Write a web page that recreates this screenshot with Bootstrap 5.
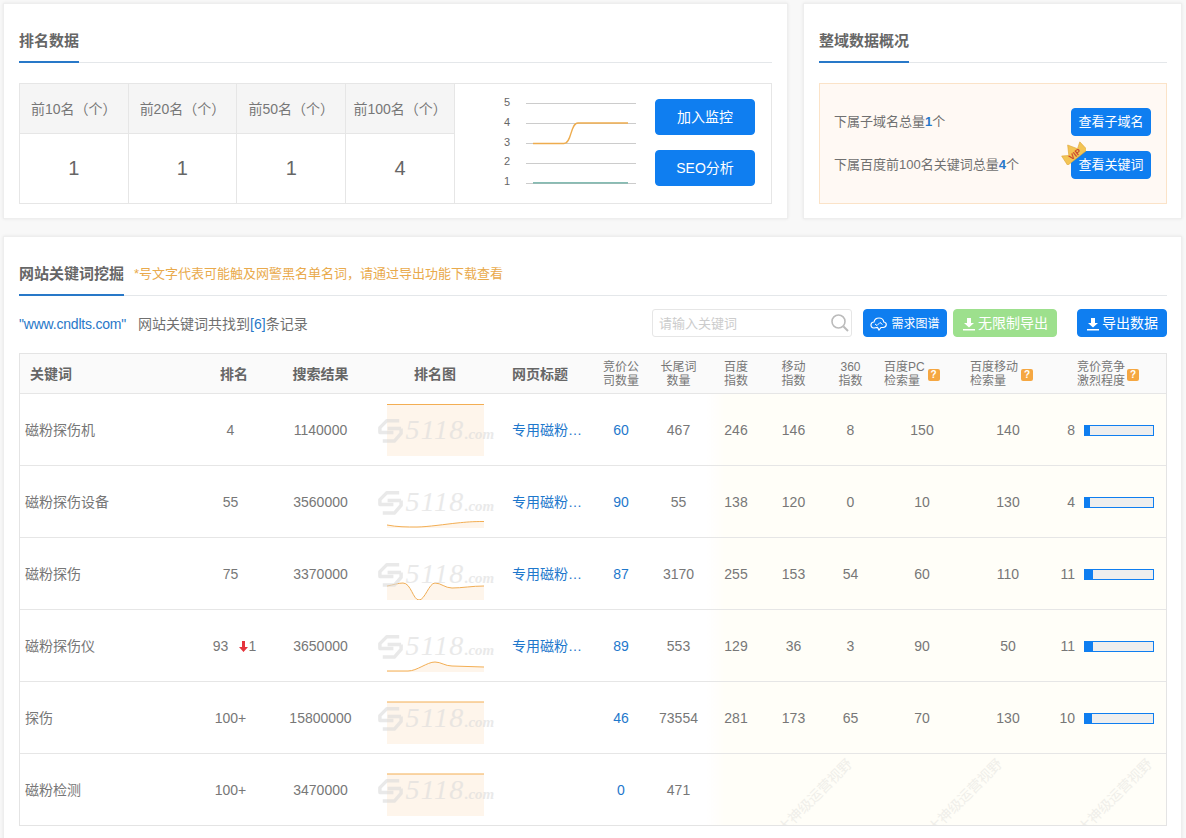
<!DOCTYPE html>
<html lang="zh-CN">
<head>
<meta charset="utf-8">
<title>网站关键词挖掘</title>
<link rel="stylesheet" href="https://cdn.jsdelivr.net/npm/bootstrap@5.3.0/dist/css/bootstrap.min.css">
<style>
html,body{overflow:hidden;height:838px}
body{background:#f8f8f8;color:#777;font:14px/20px "Liberation Sans","Noto Sans CJK SC",sans-serif;padding:3px 4px 0 3px}
.top-row{gap:15px}
.pane{background:#fff;border:1px solid #eee;box-shadow:0 0 3px rgba(0,0,0,.08);padding:19px 15px 15px}
.pane-top{height:216px}
.pane-main{width:785px;flex:none}
.pane-side{width:379px;flex:none;padding-right:14px}
.pane-low{margin-top:17px;height:640px;position:relative;padding-right:14px}
.tabline{display:flex;align-items:flex-start;border-bottom:1px solid #e4e7ea;height:40px}
.tabname{display:block;height:40px;line-height:36px;font-size:15px;font-weight:700;color:#666;border-bottom:2px solid #2878c8}
.note{color:#e9aa4c;font-size:13px;line-height:35px;margin-left:10px}
.rank-box{margin-top:20px;height:121px;border:1px solid #e6e6e6}
.rank-grid{width:435px;flex:none;margin:0;table-layout:fixed;--bs-table-bg:transparent;color:#666}
.rank-grid th,.rank-grid td{border:1px solid #e6e6e6;border-width:0 1px 1px 0;padding:0;text-align:center;vertical-align:middle}
.rank-grid th:first-child{width:108px}
.rank-grid tr:last-child td{border-bottom:0}
.rank-grid th{height:49px;background:#f5f5f5;font-weight:400;color:#777;white-space:nowrap;padding-top:2px}
.rank-grid td{height:70px;font-size:20px;color:#666}
.btn-blue{--bs-btn-bg:#0f7ef0;--bs-btn-border-color:#0f7ef0;--bs-btn-color:#fff;--bs-btn-hover-bg:#0f7ef0;--bs-btn-hover-color:#fff;--bs-btn-border-radius:4px;--bs-btn-padding-x:0;--bs-btn-padding-y:0;--bs-btn-font-size:14px}
.big-btn{width:100px;height:36px;line-height:34px}
.ctrl-col{margin-left:14px;padding-top:15px;gap:15px}
.trend{width:145px;height:104px;margin-left:41px;display:block;flex:none}
.trend text{font:11px "Liberation Sans",sans-serif;fill:#666}
.over-box{margin-top:20px;height:121px;background:#fff9f4;border:1px solid #fbe3c8;padding:24px 15px 0 14px;font-size:13px;gap:15px;color:#707070}
.over-box b{color:#2878c8}
.mini-btn{width:80px;height:28px;line-height:26px;--bs-btn-font-size:13px}
.crown{position:absolute;left:-10px;top:-11px;width:25px;height:25px}
.tool{margin-top:13px;height:28px;margin-bottom:16px}
.site{color:#2878c8}
.site-url{letter-spacing:-.2px;padding-top:2px}
.found{margin-left:12px;margin-right:auto;color:#707070;padding-top:2px}
.finder{width:200px;height:28px;border:1px solid #e6e6e6;border-radius:3px;font-size:13px;color:#ccc;padding:0 0 0 6px}
.finder span{padding-top:2px}
.finder svg{margin-right:1px}
.tbtn{height:28px;display:inline-flex;align-items:center;justify-content:center;gap:2px;padding-top:1px}
.tb-a{width:84px;--bs-btn-font-size:12px;gap:4px;margin-left:11px}
.tb-b{width:104px;margin-left:6px;--bs-btn-bg:#9de08d;--bs-btn-border-color:#9de08d;--bs-btn-hover-bg:#9de08d;--bs-btn-hover-border-color:#9de08d}
.tb-c{width:90px;margin-left:20px}
.grid-wrap{position:relative;overflow:hidden;border:1px solid #e4e4e4;height:473px}
.kw{table-layout:fixed;margin:0;width:1146px;--bs-table-bg:transparent;color:#777}
.kw>:not(caption)>*>*{padding:2px 0 0;border-bottom:1px solid #e6e6e6;text-align:center;vertical-align:middle;color:#777;box-shadow:none}
.kw thead th{height:39px;background:#fafafa;font-weight:700;color:#666}
.kw thead th.thin{font-weight:400;font-size:12px;line-height:14px;color:#777}
.kw tbody td{height:72px}
.kw tbody tr:last-child td{border-bottom:0}
.kw .kn{text-align:left;padding-left:5px}
.kw thead .kn{padding-left:10px}
.kw thead .hd-rank{padding-left:7px}
.kw .tt{text-align:left;padding-left:17px}
.kw thead .tt{padding-left:17px}
.kw td a{color:#1e78cc;text-decoration:none}
.kw .warm{background:#fffef8}
.kw .warm-in{background:linear-gradient(90deg,#fff,#fffef8 30%,#fffef8)}
.w1{width:175px}.w2{width:71px}.w3{width:109px}.w4{width:120px}.w5{width:97px}.w6{width:58px}.w7{width:57px}.w8{width:58px}.w9{width:57px}.w10{width:57px}.w11{width:86px}.w12{width:86px}.w13{width:115px}
.hq{display:flex;align-items:center;gap:3px;text-align:left;padding-left:5px}
.hq-c{padding-left:26px;gap:2px}
.qm{flex:none;display:block;width:12px;height:12px;border-radius:2px;background:#f5a742;color:#fff;font-size:10px;font-weight:700;line-height:12px;text-align:center;margin-top:2px}
.spark{position:relative;width:97px;height:52px;margin:0 auto}
.spark svg.pic{display:block;width:97px;height:52px}
.wm{position:absolute;left:-10px;top:11px;width:118px;height:30px;display:flex;align-items:center;color:#dcdcdc;opacity:.6;font-family:"Liberation Serif",serif;font-style:italic;white-space:nowrap}
.wm svg{width:27px;height:27px;flex:none}
.wm b{font-size:28px;font-weight:400;letter-spacing:1.300px;margin-left:2px}
.wm i{font-size:15px;font-weight:700;margin-top:7px}
.comp{display:flex;align-items:center;justify-content:flex-end;padding-right:12px;gap:9px}
.meter{width:70px;height:11px;border:1px solid #0f7ef0;background:#eee;display:block}
.meter span{display:block;height:100%;background:#0f7ef0}
.rank-move{margin-left:8px}
.down{display:inline-flex;align-items:center;margin-left:11px}
.stamp{position:absolute;transform:rotate(-45deg);color:#f0efea;font-size:14px;white-space:nowrap;top:432px;pointer-events:none}
.st-a{left:746px}.st-b{left:896px}.st-c{left:1046px}
</style>
</head>
<body>
<svg width="0" height="0" class="position-absolute">
  <symbol id="logo" viewBox="0 0 28 28"><path d="M23 4H10L3 11v5h14M25 12H11M25 12v5l-7 8H6" fill="none" stroke="currentColor" stroke-width="3.6" stroke-linejoin="round"/></symbol>
  <symbol id="dl" viewBox="0 0 14 14"><path d="M5 1h4v5h3L7 10.500 2 6h3zM1 12h12v1.600H1z" fill="#fff"/></symbol>
</svg>

<div class="d-flex top-row">
  <section class="pane pane-top pane-main">
    <div class="tabline"><span class="tabname">排名数据</span></div>
    <div class="rank-box d-flex">
      <table class="table rank-grid">
        <thead><tr><th>前10名（个）</th><th>前20名（个）</th><th>前50名（个）</th><th>前100名（个）</th></tr></thead>
        <tbody><tr><td>1</td><td>1</td><td>1</td><td>4</td></tr></tbody>
      </table>
      <svg class="trend" viewBox="0 0 145 104">
        <path d="M30 19.500H140M30 39.500H140M30 59.500H140M30 79.500H140M30 99.500H140" stroke="#ccc" stroke-width="1"/>
        <g text-anchor="middle"><text x="11" y="22">5</text><text x="11" y="42">4</text><text x="11" y="62">3</text><text x="11" y="81">2</text><text x="11" y="101">1</text></g>
        <path d="M37 59.500H68C76 59.500 74 39 82 39H132" fill="none" stroke="#eeac4e" stroke-width="1.300"/>
        <path d="M37 98.800H132" fill="none" stroke="#5fa79b" stroke-width="1.300"/>
      </svg>
      <div class="ctrl-col d-flex flex-column">
        <a class="btn btn-blue big-btn" href="#">加入监控</a>
        <a class="btn btn-blue big-btn" href="#">SEO分析</a>
      </div>
    </div>
  </section>
  <section class="pane pane-top pane-side">
    <div class="tabline"><span class="tabname">整域数据概况</span></div>
    <div class="over-box d-flex flex-column">
      <div class="d-flex justify-content-between align-items-center">
        <span>下属子域名总量<b>1</b>个</span>
        <a class="btn btn-blue mini-btn" href="#">查看子域名</a>
      </div>
      <div class="d-flex justify-content-between align-items-center">
        <span>下属百度前100名关键词总量<b>4</b>个</span>
        <span class="position-relative d-block">
          <a class="btn btn-blue mini-btn" href="#">查看关键词</a>
          <svg class="crown" viewBox="0 0 25 25"><g transform="rotate(-38 12.500 12.500)"><path d="M0 19 L1 8 L7 12 L12.500 3 L18 12 L24 8 L25 19 Z" fill="#f3c454" stroke="#dfa83a" stroke-width=".6"/><text x="12.500" y="17.500" text-anchor="middle" font-size="8" font-weight="700" fill="#c8452a" font-family="Liberation Sans">VIP</text></g></svg>
        </span>
      </div>
    </div>
  </section>
</div>

<section class="pane pane-low">
  <div class="tabline"><span class="tabname">网站关键词挖掘</span><span class="note">*号文字代表可能触及网警黑名单名词，请通过导出功能下载查看</span></div>
  <div class="tool d-flex align-items-center">
    <span class="site site-url">"www.cndlts.com"</span>
    <span class="found">网站关键词共找到<span class="site">[6]</span>条记录</span>
    <div class="finder d-flex align-items-center justify-content-between">
      <span>请输入关键词</span>
      <svg width="20" height="20" viewBox="0 0 20 20"><circle cx="8.500" cy="8.500" r="6.500" fill="none" stroke="#bbb" stroke-width="1.600"/><path d="M13.500 13.500L18 18" stroke="#bbb" stroke-width="2"/></svg>
    </div>
    <a class="btn btn-blue tbtn tb-a" href="#"><svg width="17" height="14" viewBox="0 0 17 14"><path d="M4 11C1.500 11 .8 9 1 7.500 1.300 5.500 3 5 4 5 4.500 2.500 6.500 1 9 1c3 0 4.500 2 4.800 4 1.800.3 2.700 1.700 2.400 3.200-.3 1.500-1.700 2.300-3 2.300H11l-2 2.500-1.500-2.500z" fill="none" stroke="#fff" stroke-width="1.200"/><path d="M5 7l2 1.500M7 8.500L10 5.500M10 5.500l2.500 2" stroke="#fff" stroke-width="1"/></svg>需求图谱</a>
    <a class="btn btn-blue tbtn tb-b" href="#"><svg width="14" height="14"><use href="#dl"/></svg>无限制导出</a>
    <a class="btn btn-blue tbtn tb-c" href="#"><svg width="14" height="14"><use href="#dl"/></svg>导出数据</a>
  </div>
  <div class="grid-wrap">
    <table class="table kw">
      <colgroup><col class="w1"><col class="w2"><col class="w3"><col class="w4"><col class="w5"><col class="w6"><col class="w7"><col class="w8"><col class="w9"><col class="w10"><col class="w11"><col class="w12"><col class="w13"></colgroup>
      <thead><tr>
        <th class="kn">关键词</th><th class="hd-rank">排名</th><th>搜索结果</th><th>排名图</th><th class="tt">网页标题</th>
        <th class="thin">竞价公<br>司数量</th><th class="thin">长尾词<br>数量</th><th class="thin">百度<br>指数</th><th class="thin">移动<br>指数</th><th class="thin">360<br>指数</th>
        <th class="thin"><div class="hq"><span>百度PC<br>检索量</span><i class="qm fst-normal">?</i></div></th>
        <th class="thin"><div class="hq"><span>百度移动<br>检索量</span><i class="qm fst-normal">?</i></div></th>
        <th class="thin"><div class="hq hq-c"><span>竞价竞争<br>激烈程度</span><i class="qm fst-normal">?</i></div></th>
      </tr></thead>
      <tbody>
        <tr>
          <td class="kn">磁粉探伤机</td><td>4</td><td>1140000</td>
          <td><div class="spark"><svg class="pic" viewBox="0 0 97 52"><path d="M0 .5H97V52H0Z" fill="#fef5eb"/><path d="M0 .5H97" stroke="#f3ae53" fill="none"/></svg><div class="wm"><svg><use href="#logo"/></svg><b>5118</b><i>.com</i></div></div></td>
          <td class="tt"><a href="#">专用磁粉…</a></td><td><a href="#">60</a></td><td>467</td>
          <td class="warm-in">246</td><td class="warm">146</td><td class="warm">8</td><td class="warm">150</td><td class="warm">140</td>
          <td class="warm"><div class="comp"><span>8</span><span class="meter"><span style="width:8%"></span></span></div></td>
        </tr>
        <tr>
          <td class="kn">磁粉探伤设备</td><td>55</td><td>3560000</td>
          <td><div class="spark"><svg class="pic" viewBox="0 0 97 52"><path d="M0 49C10 51 20 51 30 51S60 48 70 47 85 45.500 97 45.500V52H0Z" fill="#fef5eb"/><path d="M0 49C10 51 20 51 30 51S60 48 70 47 85 45.500 97 45.500" stroke="#f3ae53" fill="none"/></svg><div class="wm"><svg><use href="#logo"/></svg><b>5118</b><i>.com</i></div></div></td>
          <td class="tt"><a href="#">专用磁粉…</a></td><td><a href="#">90</a></td><td>55</td>
          <td class="warm-in">138</td><td class="warm">120</td><td class="warm">0</td><td class="warm">10</td><td class="warm">130</td>
          <td class="warm"><div class="comp"><span>4</span><span class="meter"><span style="width:8%"></span></span></div></td>
        </tr>
        <tr>
          <td class="kn">磁粉探伤</td><td>75</td><td>3370000</td>
          <td><div class="spark"><svg class="pic" viewBox="0 0 97 52"><path d="M0 38C6 37 11 35 16 35 24 35 26 52 32 52 38 52 42 35 48 35 54 35 58 40 65 40 75 40 85 38 97 38V52H0Z" fill="#fef5eb"/><path d="M0 38C6 37 11 35 16 35 24 35 26 52 32 52 38 52 42 35 48 35 54 35 58 40 65 40 75 40 85 38 97 38" stroke="#f0ad55" fill="none"/></svg><div class="wm"><svg><use href="#logo"/></svg><b>5118</b><i>.com</i></div></div></td>
          <td class="tt"><a href="#">专用磁粉…</a></td><td><a href="#">87</a></td><td>3170</td>
          <td class="warm-in">255</td><td class="warm">153</td><td class="warm">54</td><td class="warm">60</td><td class="warm">110</td>
          <td class="warm"><div class="comp"><span>11</span><span class="meter"><span style="width:12%"></span></span></div></td>
        </tr>
        <tr>
          <td class="kn">磁粉探伤仪</td>
          <td><span class="d-inline-flex align-items-center rank-move">93<span class="down"><svg width="9" height="11" viewBox="0 0 9 11"><path d="M3 0h3v6h3L4.500 11 0 6h3z" fill="#e5343d"/></svg>1</span></span></td>
          <td>3650000</td>
          <td><div class="spark"><svg class="pic" viewBox="0 0 97 52"><path d="M0 51H21C30 51 40 42 48 42 54 42 58 46 65 46L97 47V52H0Z" fill="#fef5eb"/><path d="M0 51H21C30 51 40 42 48 42 54 42 58 46 65 46L97 47" stroke="#f3ae53" fill="none"/></svg><div class="wm"><svg><use href="#logo"/></svg><b>5118</b><i>.com</i></div></div></td>
          <td class="tt"><a href="#">专用磁粉…</a></td><td><a href="#">89</a></td><td>553</td>
          <td class="warm-in">129</td><td class="warm">36</td><td class="warm">3</td><td class="warm">90</td><td class="warm">50</td>
          <td class="warm"><div class="comp"><span>11</span><span class="meter"><span style="width:12%"></span></span></div></td>
        </tr>
        <tr>
          <td class="kn">探伤</td><td>100+</td><td>15800000</td>
          <td><div class="spark"><svg class="pic" viewBox="0 0 97 52"><path d="M0 10H97V52H0Z" fill="#fef5eb"/><path d="M0 10H97" stroke="#f3ae53" fill="none"/></svg><div class="wm"><svg><use href="#logo"/></svg><b>5118</b><i>.com</i></div></div></td>
          <td class="tt"></td><td><a href="#">46</a></td><td>73554</td>
          <td class="warm-in">281</td><td class="warm">173</td><td class="warm">65</td><td class="warm">70</td><td class="warm">130</td>
          <td class="warm"><div class="comp"><span>10</span><span class="meter"><span style="width:11%"></span></span></div></td>
        </tr>
        <tr>
          <td class="kn">磁粉检测</td><td>100+</td><td>3470000</td>
          <td><div class="spark"><svg class="pic" viewBox="0 0 97 52"><path d="M0 10H97V52H0Z" fill="#fef5eb"/><path d="M0 10H97" stroke="#f3ae53" fill="none"/></svg><div class="wm"><svg><use href="#logo"/></svg><b>5118</b><i>.com</i></div></div></td>
          <td class="tt"></td><td><a href="#">0</a></td><td>471</td>
          <td class="warm-in"></td><td class="warm"></td><td class="warm"></td><td class="warm"></td><td class="warm"></td><td class="warm"></td>
        </tr>
      </tbody>
    </table>
    <span class="stamp st-a">大神级运营视野</span>
    <span class="stamp st-b">大神级运营视野</span>
    <span class="stamp st-c">大神级运营视野</span>
  </div>
</section>
</body>
</html>
